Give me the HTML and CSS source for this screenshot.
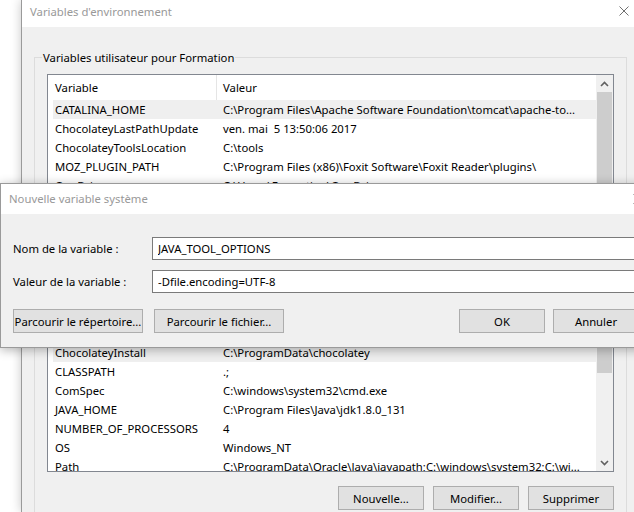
FILE: index.html
```html
<!DOCTYPE html>
<html lang="fr">
<head>
<meta charset="utf-8">
<title>Variables d'environnement</title>
<link rel="stylesheet" href="styles.css">
</head>
<body>
<div class="envwin">
  <div class="titlebar">
    <span class="title">Variables d'environnement</span>
    <span class="close"><svg width="10" height="10" viewBox="0 0 10 10"><path d="M0.5 0.5L9.5 9.5M9.5 0.5L0.5 9.5" stroke="#707070" stroke-width="1" fill="none"/></svg></span>
  </div>
  <div class="winbody">
    <fieldset class="group group-user">
      <legend>Variables utilisateur pour Formation</legend>
      <div class="list list-user">
        <div class="list-main">
          <div class="list-head"><div class="hcol1">Variable</div><div class="hcol2">Valeur</div></div>
          <div class="row sel"><span class="c1">CATALINA_HOME</span><span class="c2">C:\Program Files\Apache Software Foundation\tomcat\apache-to...</span></div>
          <div class="row"><span class="c1">ChocolateyLastPathUpdate</span><span class="c2">ven. mai&nbsp; 5 13:50:06 2017</span></div>
          <div class="row"><span class="c1">ChocolateyToolsLocation</span><span class="c2">C:\tools</span></div>
          <div class="row"><span class="c1">MOZ_PLUGIN_PATH</span><span class="c2">C:\Program Files (x86)\Foxit Software\Foxit Reader\plugins\</span></div>
          <div class="row"><span class="c1">OneDrive</span><span class="c2">C:\Users\Formation\OneDrive</span></div>
          <div class="row"><span class="c1">Path</span><span class="c2">C:\Users\Formation\AppData\Local\Microsoft\WindowsApps;</span></div>
          <div class="row"><span class="c1">TEMP</span><span class="c2">C:\Users\Formation\AppData\Local\Temp</span></div>
        </div>
        <div class="scrollbar">
          <div class="arrow"><svg width="9" height="6" viewBox="0 0 9 6"><path d="M1 5L4.5 1.5L8 5" stroke="#606060" stroke-width="1.6" fill="none"/></svg></div>
          <div class="thumb thumb-user"></div>
          <div class="track"></div>
          <div class="arrow"><svg width="9" height="6" viewBox="0 0 9 6"><path d="M1 1L4.5 4.5L8 1" stroke="#606060" stroke-width="1.6" fill="none"/></svg></div>
        </div>
      </div>
      <div class="btnrow">
        <button class="btn">Nouvelle...</button>
        <button class="btn">Modifier...</button>
        <button class="btn">Supprimer</button>
      </div>
    </fieldset>
    <fieldset class="group group-sys">
      <legend>Variables système</legend>
      <div class="list list-sys">
        <div class="list-main">
          <div class="list-head"><div class="hcol1">Variable</div><div class="hcol2">Valeur</div></div>
          <div class="row sel"><span class="c1">ChocolateyInstall</span><span class="c2">C:\ProgramData\chocolatey</span></div>
          <div class="row"><span class="c1">CLASSPATH</span><span class="c2">.;</span></div>
          <div class="row"><span class="c1">ComSpec</span><span class="c2">C:\windows\system32\cmd.exe</span></div>
          <div class="row"><span class="c1">JAVA_HOME</span><span class="c2">C:\Program Files\Java\jdk1.8.0_131</span></div>
          <div class="row"><span class="c1">NUMBER_OF_PROCESSORS</span><span class="c2">4</span></div>
          <div class="row"><span class="c1">OS</span><span class="c2">Windows_NT</span></div>
          <div class="row"><span class="c1">Path</span><span class="c2">C:\ProgramData\Oracle\Java\javapath;C:\windows\system32;C:\wi...</span></div>
          <div class="row"><span class="c1">PATHEXT</span><span class="c2">.COM;.EXE;.BAT;.CMD;.VBS;.VBE;.JS;.JSE;.WSF;.WSH;.MSC</span></div>
        </div>
        <div class="scrollbar">
          <div class="arrow"><svg width="9" height="6" viewBox="0 0 9 6"><path d="M1 5L4.5 1.5L8 5" stroke="#606060" stroke-width="1.6" fill="none"/></svg></div>
          <div class="thumb thumb-sys"></div>
          <div class="track"></div>
          <div class="arrow"><svg width="9" height="6" viewBox="0 0 9 6"><path d="M1 1L4.5 4.5L8 1" stroke="#606060" stroke-width="1.6" fill="none"/></svg></div>
        </div>
      </div>
      <div class="btnrow">
        <button class="btn">Nouvelle...</button>
        <button class="btn">Modifier...</button>
        <button class="btn">Supprimer</button>
      </div>
    </fieldset>
  </div>
</div>

<div class="dialog">
  <div class="dtitlebar">
    <span class="dtitle">Nouvelle variable système</span>
    <span class="dclose"><svg width="10" height="10" viewBox="0 0 10 10"><path d="M0.5 0.5L9.5 9.5M9.5 0.5L0.5 9.5" stroke="#707070" stroke-width="1" fill="none"/></svg></span>
  </div>
  <div class="dbody">
    <div class="form">
      <label class="flabel" for="vname">Nom de la variable :</label>
      <input class="finput" id="vname" type="text" value="JAVA_TOOL_OPTIONS">
      <label class="flabel" for="vvalue">Valeur de la variable :</label>
      <input class="finput" id="vvalue" type="text" value="-Dfile.encoding=UTF-8">
    </div>
    <div class="dbtnrow">
      <button class="btn btn-browse">Parcourir le répertoire...</button>
      <button class="btn btn-browse">Parcourir le fichier...</button>
      <button class="btn btn-ok">OK</button>
      <button class="btn">Annuler</button>
    </div>
  </div>
</div>
</body>
</html>
```

FILE: styles.css
```css
* { box-sizing: border-box; }

html, body {
  margin: 0;
  padding: 0;
}

body {
  width: 634px;
  height: 512px;
  overflow: hidden;
  position: relative;
  background: #ffffff;
  font-family: "Noto Sans", "Open Sans", sans-serif;
  font-size: 11.3px;
  color: #000;
}

/* background window */
.envwin {
  margin-left: 21px;
  width: 626px;
  height: 512px;
  border-left: 1px solid #9a9a9a;
  background: #f0f0f0;
  box-shadow: 0 0 10px rgba(0, 0, 0, 0.22);
}

.titlebar {
  height: 27px;
  background: #ffffff;
  display: flex;
  justify-content: space-between;
  align-items: flex-start;
}

.title {
  padding-left: 8px;
  padding-top: 4px;
  line-height: 16px;
  color: #999999;
}

.close {
  display: block;
  margin-top: 6px;
  margin-right: 18px;
  height: 10px;
}
.close svg, .dclose svg { display: block; }

.winbody {
  padding-left: 12px;
}

.group {
  margin: 23px 0 0 0;
  width: 593px;
  min-width: 0;
  padding: 9px 12px 10px 12px;
  border: 1px solid #dcdcdc;
}

.group-sys {
  margin-top: 18px;
}

.group legend {
  padding: 0 1px;
  margin-left: -5px;
  line-height: 15px;
}

.list {
  display: flex;
  border: 1px solid #828790;
  background: #ffffff;
}

.list-user { height: 156px; }
.list-sys { height: 155px; }

.list-main {
  flex: 1;
  min-width: 0;
  overflow: hidden;
}

.list-head {
  display: flex;
  height: 25px;
  align-items: stretch;
}

.hcol1 {
  width: 169px;
  padding-left: 7px;
  border-right: 1px solid #e5e5e5;
  display: flex;
  align-items: center;
}

.hcol2 {
  padding-left: 6px;
  display: flex;
  align-items: center;
}

.row {
  display: flex;
  align-items: center;
  height: 19px;
  margin-left: 5px;
  white-space: nowrap;
}

.row.sel {
  background: #efefef;
}

.c1 {
  width: 163px;
  flex: none;
  padding-left: 2px;
}

.c2 {
  padding-left: 7px;
}

.scrollbar {
  width: 17px;
  flex: none;
  background: #f0f0f0;
  display: flex;
  flex-direction: column;
}

.arrow {
  height: 17px;
  flex: none;
  display: flex;
  align-items: center;
  justify-content: center;
}
.arrow svg { display: block; }

.thumb {
  margin: 0 1px;
  background: #cdcdcd;
  flex: none;
}
.thumb-user { height: 100px; }
.thumb-sys { margin-top: 8px; height: 30px; }

.track { flex: 1; }

.btnrow {
  display: flex;
  justify-content: flex-end;
  gap: 9px;
}

.list-user + .btnrow { margin-top: 10px; }
.list-sys + .btnrow { margin-top: 14px; }

.btn {
  width: 86px;
  height: 24px;
  padding: 0;
  background: #e1e1e1;
  border: 1px solid #adadad;
  font-family: inherit;
  font-size: 11.3px;
  color: #000;
  white-space: nowrap;
}

/* dialog window */
.dialog {
  position: absolute;
  left: 0;
  top: 183px;
  width: 660px;
  height: 165px;
  border: 1px solid #9a9a9a;
  background: #f0f0f0;
  box-shadow: 0 2px 10px rgba(0, 0, 0, 0.3);
}

.dtitlebar {
  height: 30px;
  background: #ffffff;
  display: flex;
  justify-content: space-between;
  align-items: center;
}

.dtitle {
  padding-left: 8px;
  line-height: 30px;
  color: #999999;
}

.dclose {
  display: block;
  margin-right: 16px;
  height: 10px;
}

.dbody {
  padding: 23px 20px 0 12px;
}

.form {
  display: grid;
  grid-template-columns: 139px 1fr;
  row-gap: 10px;
  align-items: center;
}

.finput {
  height: 23px;
  border: 1px solid #7a7a7a;
  background: #ffffff;
  padding: 0 5px;
  font-family: inherit;
  font-size: 11.3px;
  color: #000;
  outline: none;
  margin: 0;
  width: 100%;
}

.dbtnrow {
  margin-top: 16px;
  display: flex;
  gap: 11px;
}

.btn-browse { width: 130px; }

.btn-ok {
  margin-left: auto;
  margin-right: -3px;
}
```
